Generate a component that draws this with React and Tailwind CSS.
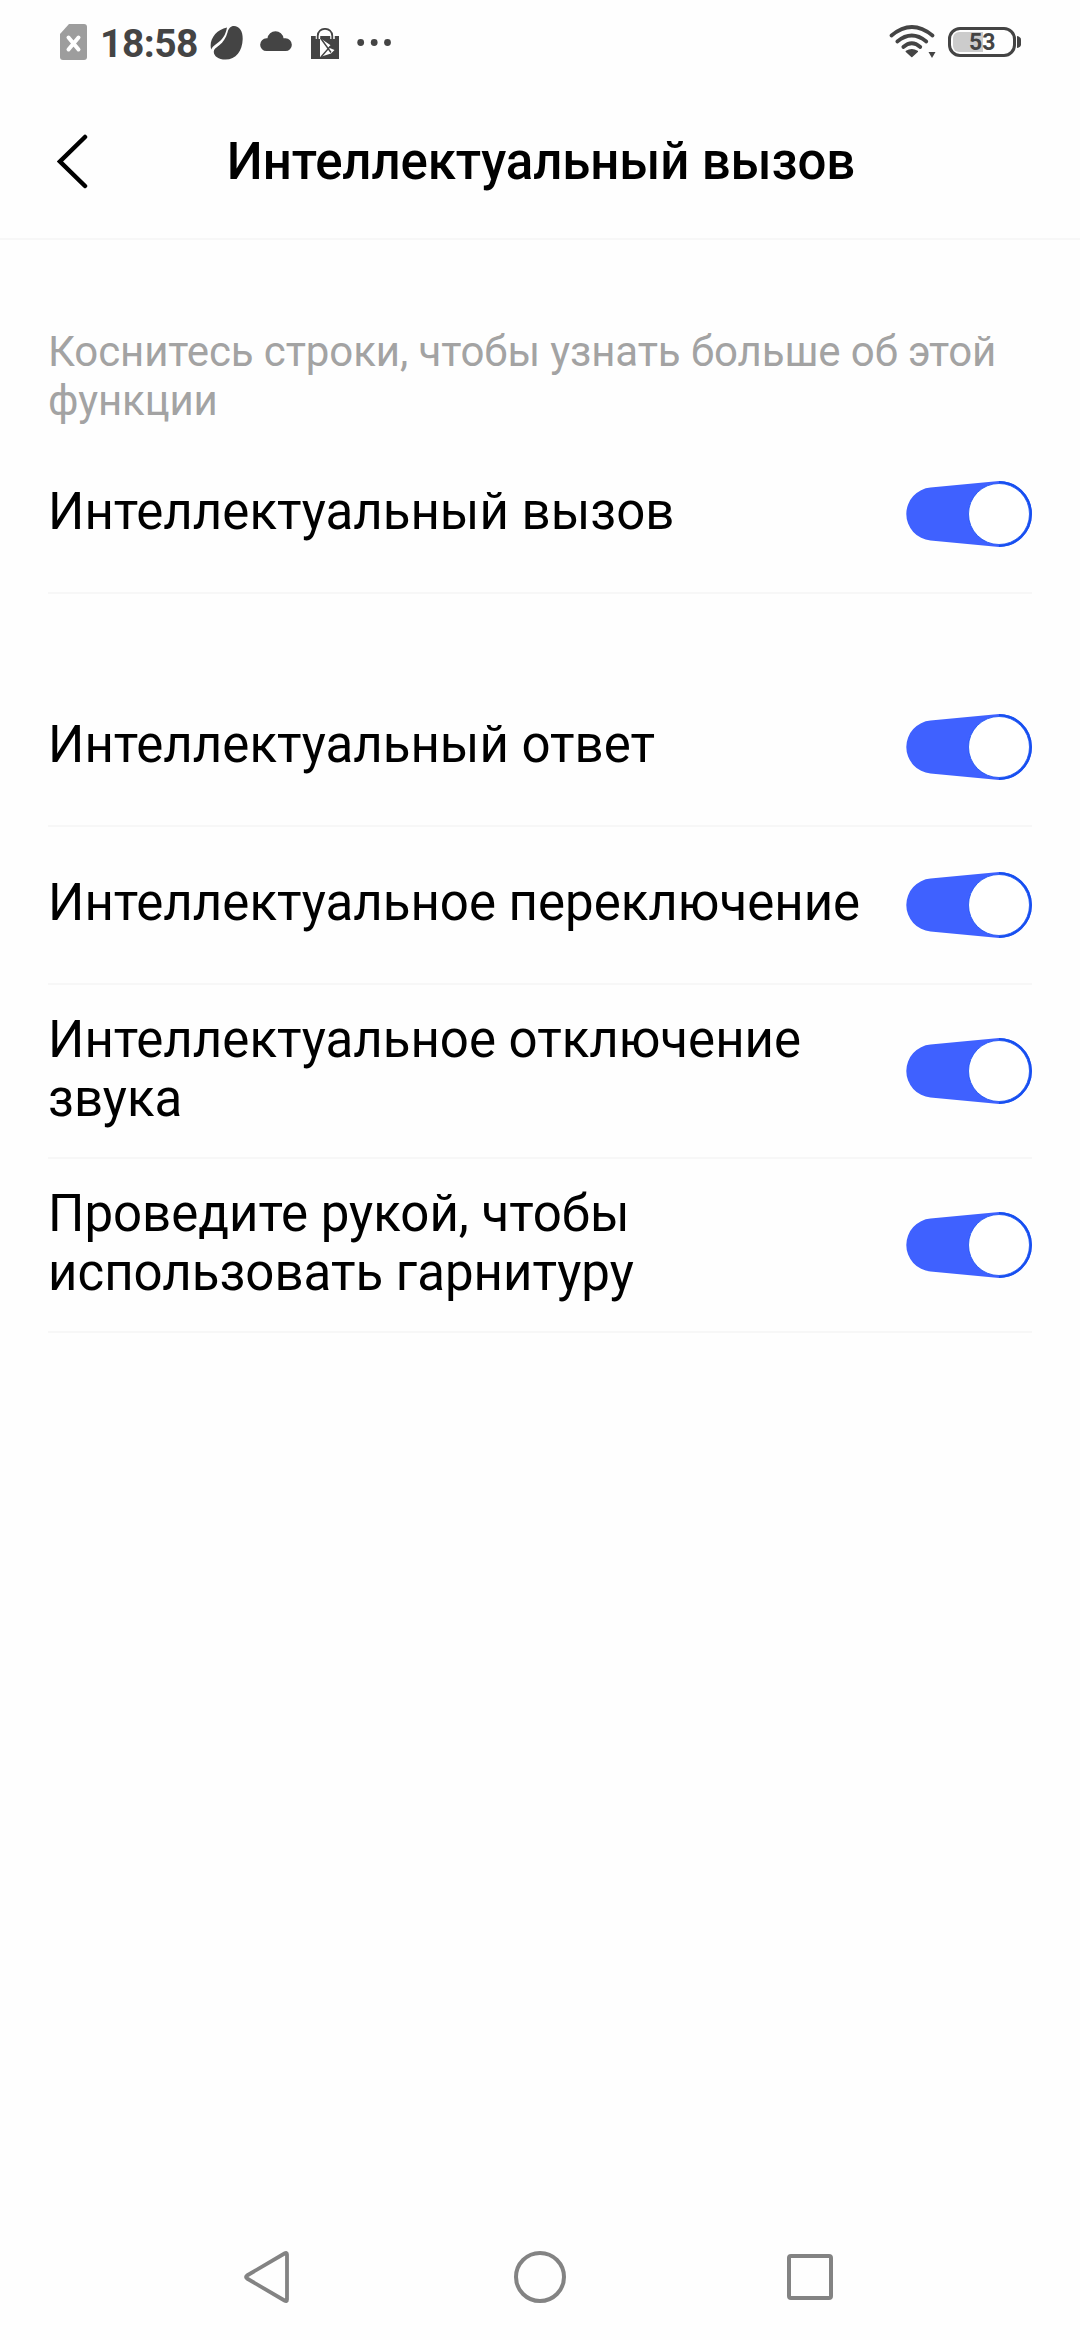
function StatusBar() {
  return (
    <header className="flex h-[84px] items-center pl-[60px] pr-[59px] text-[#444444]">
      <svg className="h-9 w-[27px]" viewBox="0 0 27 36">
        <path d="M9 0H24Q27 0 27 3V33Q27 36 24 36H3Q0 36 0 33V10Z" fill="#9d9d9d" />
        <path d="M8.5 13.5L18.5 25.5M18.5 13.5L8.5 25.5" stroke="#fff" strokeWidth="4" strokeLinecap="round" />
      </svg>
      <span className="ml-[13px] w-[98px] whitespace-nowrap pt-1 text-[39px] font-bold leading-[46px] tracking-[-0.5px]">18:58</span>
      <svg className="ml-3 mt-[1px] h-[34px] w-[33px]" viewBox="0 0 33 34" fill="currentColor">
        <path d="M24 0C29 0 33 5 32.7 13C32.4 25 26 33.6 15.5 33.6C8.5 33.6 3.8 30 3.8 26C3.8 23 6 22 9 19.5C13.5 16 16 11.5 17.5 6.5C18.5 2.500 20.5 0 24 0Z" />
        <path d="M17 1.5C15.5 9 13 13 7.5 17C3.5 19.8 2 21.5 1.2 23.5C-1.5 14 6 3.5 17 1.5Z" />
      </svg>
      <svg className="ml-[17px] mt-[-2px] h-5 w-8" viewBox="0 0 32 20" fill="currentColor">
        <path d="M6.5 20A6.3 6.3 0 0 1 6.5 7.3H7.5A8.05 8.05 0 0 1 23.5 7.3H25.5A6.3 6.3 0 0 1 25.5 20Z" />
      </svg>
      <svg className="ml-[19px] mt-[2px] h-[31px] w-7" viewBox="0 0 28 31">
        <path d="M0 8H28V31H0Z" fill="#444444" />
        <path d="M7 11V8C7 -1.5 21.5 -1.5 21.5 8V11" fill="none" stroke="#fff" strokeWidth="4.500" />
        <path d="M6.7 11V8C6.7 -1.5 21.3 -1.5 21.3 8V11" fill="none" stroke="#444444" strokeWidth="1.8" />
        <path d="M9 10L20 17.5L17.5 19.500L23.5 22L20 25.5L9 29Z" fill="#fff" />
        <path d="M9.5 10L20 24.5M20 17.5L10 29" fill="none" stroke="#444444" strokeWidth="1.4" />
      </svg>
      <svg className="ml-[18px] mt-[1px] h-[7px] w-[34px]" viewBox="0 0 34 7" fill="currentColor">
        <circle cx="3.7" cy="3.5" r="3.4" />
        <circle cx="17.2" cy="3.5" r="3.4" />
        <circle cx="30.5" cy="3.5" r="3.4" />
      </svg>
      <svg className="ml-auto h-[34px] w-[47px]" viewBox="0 0 47 34" fill="none" stroke="currentColor" strokeWidth="3.7" strokeLinecap="round">
        <path d="M2.5 10.5Q22.8 -6.5 43.5 10.5" />
        <path d="M8.3 16.5Q22.8 4.5 37.3 16.5" />
        <path d="M14.3 22Q22.8 14.5 31.3 22" />
        <path d="M17.3 26.5Q22.8 23 28.3 26.5L22.8 31.5Z" fill="currentColor" strokeWidth="1.5" strokeLinejoin="round" />
        <path d="M39.5 27H46.5L43 33Z" fill="currentColor" stroke="none" />
      </svg>
      <div className="ml-3 flex h-[30px] w-[68px] items-center rounded-[12px] border-[3px] border-[#444444] p-[2px]">
        <div className="flex h-5 w-[30px] items-center rounded-l-[6px] bg-[#cccccc] pl-4">
          <span className="pt-[2px] text-[23px] font-bold leading-5">53</span>
        </div>
      </div>
      <svg className="ml-[1px] h-3 w-[4px]" viewBox="0 0 4 12" fill="currentColor">
        <path d="M0 0Q4 1 4 3.5V8.5Q4 11 0 12Z" />
      </svg>
    </header>
  );
}

function Toggle() {
  return (
    <svg className="h-[66px] w-[126px] shrink-0" viewBox="0 0 126 66" role="switch" aria-checked="true">
      <path
        d="M24.5 6.6L90.5 .2A32.900 32.900 0 1 1 90.5 65.800L24.5 59.4A26.5 26.5 0 0 1 24.5 6.6Z"
        fill="#3f61ff"
      />
      <path d="M93 1.400A31.600 31.600 0 0 1 93 64.600" fill="none" stroke="#164ff0" strokeWidth="2.600" />
      <circle cx="93" cy="33" r="30.5" fill="#fff" stroke="#164ff0" strokeWidth=".8" />
    </svg>
  );
}

function Row({ label, tall }) {
  return (
    <div className={(tall ? "h-[174px]" : "h-[158px]") + " flex items-center justify-between border-b-2 border-[#f7f7f7]"}>
      <span className={(tall ? "pb-1" : "pb-[5px]") + " w-[826px] text-[51px] leading-[59px] text-black"}>{label}</span>
      <Toggle />
    </div>
  );
}

const options = [
  { label: "Интеллектуальный ответ" },
  { label: "Интеллектуальное переключение" },
  { label: "Интеллектуальное отключение звука", tall: true },
  { label: "Проведите рукой, чтобы использовать гарнитуру", tall: true },
];

export default function App() {
  return (
    <div className="flex h-[2340px] w-[1080px] flex-col bg-[#fefefe] font-['Roboto',sans-serif]">
      <StatusBar />
      <div className="grid h-[156px] grid-cols-[90px_1fr_90px] items-center border-b-2 border-[#f7f7f7]">
        <svg className="ml-[57px] mt-[1px] h-[55px] w-[31px]" viewBox="0 0 31 55" fill="none" stroke="#000" strokeWidth="4.500" strokeLinecap="round">
          <path d="M28 3L3 27.5L28 52" />
        </svg>
        <h1 className="whitespace-nowrap pl-[2px] pt-[2px] text-center text-[51px] font-medium leading-[60px] tracking-[-0.11px] text-black">Интеллектуальный вызов</h1>
      </div>
      <main className="flex-1 px-12">
        <p className="mt-[87px] h-[109px] text-[42px] leading-[49px] tracking-[-0.1px] text-[#a3a3a3]">Коснитесь строки, чтобы узнать больше об этой функции</p>
        <Row label="Интеллектуальный вызов" />
        <div className="mt-[75px]">
          {options.map((o) => (
            <Row key={o.label} {...o} />
          ))}
        </div>
      </main>
      <nav className="flex h-[126px] items-center pl-[244px] text-[#838383]">
        <svg className="h-[52px] w-[45px]" viewBox="0 0 45 52" fill="none" stroke="currentColor" strokeWidth="3.8" strokeLinejoin="round">
          <path d="M43 3.5Q43 1 40.5 2.500L3 24.5Q1 26 3 27.5L40.5 49.5Q43 51 43 48.5Z" />
        </svg>
        <div className="ml-[225px] size-[52px] rounded-full border-4 border-current" />
        <div className="ml-[221px] size-[46px] rounded-[4px] border-4 border-current" />
      </nav>
    </div>
  );
}
